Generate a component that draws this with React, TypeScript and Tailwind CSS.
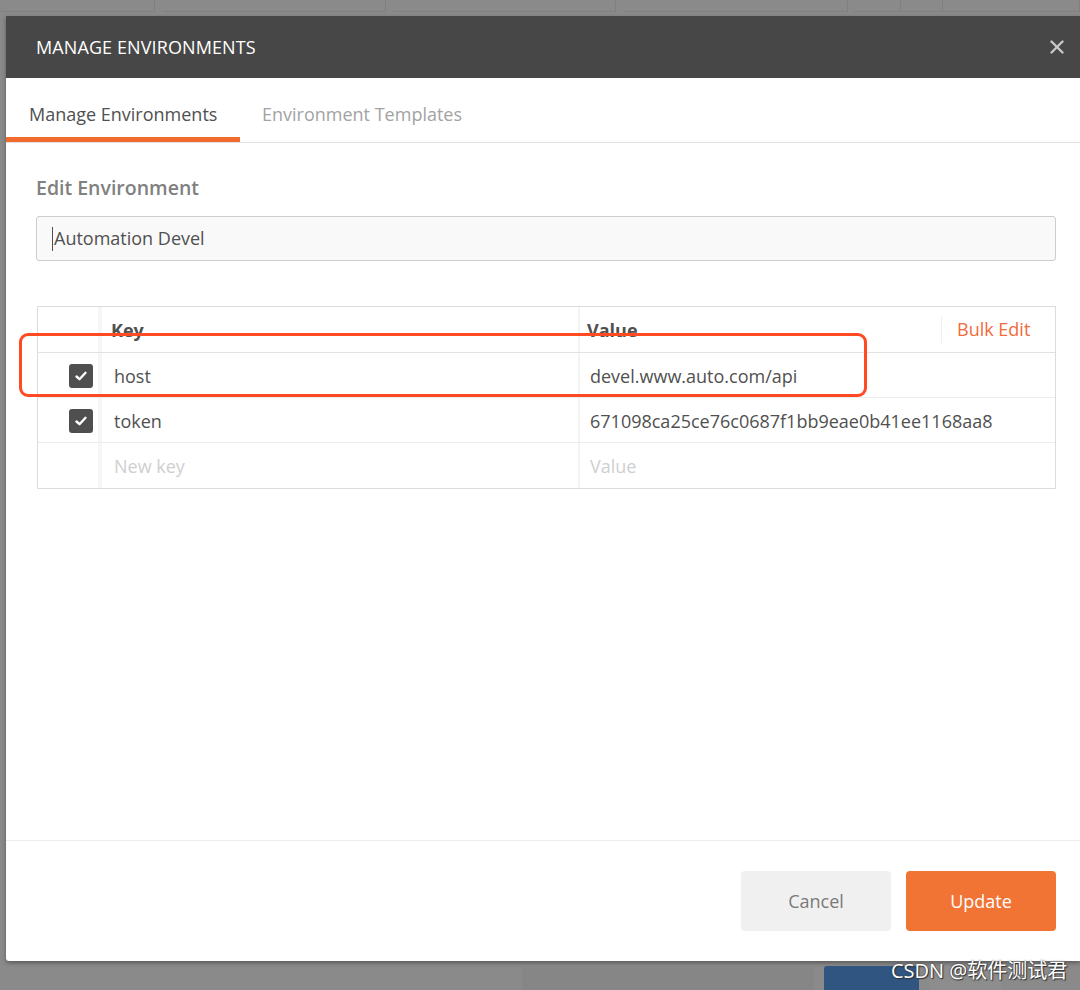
import { X } from "lucide-react";

type EnvRow = {
  key: string;
  value: string;
  enabled: boolean;
};

const rows: EnvRow[] = [
  { key: "host", value: "devel.www.auto.com/api", enabled: true },
  { key: "token", value: "671098ca25ce76c0687f1bb9eae0b41ee1168aa8", enabled: true },
];

const topCells = [155, 7, 224, 7, 223, 7, 225, 6, 47, 42, 137];

function CheckBox() {
  return (
    <div className="flex h-[24px] w-[24px] items-center justify-center rounded-[3px] bg-[#4f4f4f]">
      <svg width="16" height="16" viewBox="0 0 16 16" fill="none">
        <path
          d="M3.5 8.5 L6.5 11.2 L12.5 4.8"
          stroke="#ffffff"
          strokeWidth="2.4"
          strokeLinecap="round"
          strokeLinejoin="round"
        />
      </svg>
    </div>
  );
}

function TableRow({ row, last }: { row?: EnvRow; last?: boolean }) {
  return (
    <div
      className={`flex h-[45px] items-stretch ${last ? "" : "border-b border-[#ececec]"}`}
    >
      <div className="flex w-[60px] items-center justify-end pr-[5px] pt-[2px]">
        {row?.enabled && <CheckBox />}
      </div>
      <div className="w-[4px] bg-[#f6f6f6]" />
      <div className="flex w-[476px] items-center pl-[12px] pt-[2px] text-[18px]">
        {row ? (
          <span className="text-[#505050]">{row.key}</span>
        ) : (
          <span className="text-[#cfcfcf]">New key</span>
        )}
      </div>
      <div className="w-[2px] bg-[#f3f3f3]" />
      <div className="flex flex-1 items-center pl-[10px] pt-[2px] text-[18px]">
        {row ? (
          <span className="text-[#505050]">{row.value}</span>
        ) : (
          <span className="text-[#cfcfcf]">Value</span>
        )}
      </div>
    </div>
  );
}

function App() {
  return (
    <div
      className="relative flex h-[990px] w-[1080px] flex-col overflow-hidden bg-[#8a8a8a]"
      style={{ fontFamily: '"Open Sans", "Noto Sans CJK SC", sans-serif' }}
    >
      {/* app behind the overlay */}
      <div className="flex h-[16px] shrink-0 items-start">
        {topCells.map((w, i) => (
          <div
            key={i}
            className={`h-[12px] ${i % 2 === 1 && i < 8 ? "" : "border-r border-b border-[#808080]"}`}
            style={{ width: w }}
          />
        ))}
      </div>

      <div className="ml-[6px] flex h-[945px] shrink-0 flex-col overflow-hidden rounded-bl-[3px] bg-white shadow-[0_2px_4px_rgba(0,0,0,0.35)]">
        <div className="flex h-[62px] shrink-0 items-center justify-between bg-[#474747] pl-[30px] pr-[12px]">
          <h1 className="text-[18px] tracking-[0.1px] text-white">MANAGE ENVIRONMENTS</h1>
          <X size={22} strokeWidth={2.6} className="text-[#c9c9c9]" />
        </div>

        <div className="flex h-[65px] shrink-0 border-b border-[#e2e2e2]">
          <div className="w-[234px] border-b-[5px] border-[#f26b2e] pl-[23px] pt-[23px] text-[18px] text-[#505050]">
            Manage Environments
          </div>
          <div className="pl-[22px] pt-[23px] text-[18px] text-[#a3a3a3]">
            Environment Templates
          </div>
        </div>

        <div className="flex flex-1 flex-col pl-[30px] pr-[24px]">
          <div className="mt-[33px] text-[19.5px] font-semibold leading-[24px] text-[#808080]">
            Edit Environment
          </div>
          <div className="mt-[16px] flex h-[45px] items-center rounded-[3px] border border-[#cdcdcd] bg-[#f9f9f9] pl-[15px]">
            <span className="mr-[1px] h-[24px] w-[1px] bg-[#505050]" />
            <span className="text-[18px] text-[#505050]">Automation Devel</span>
          </div>

          <div className="mt-[45px] ml-[1px] border border-[#dcdcdc]">
            <div className="flex h-[46px] items-stretch border-b border-[#e2e2e2]">
              <div className="w-[60px]" />
              <div className="w-[4px] bg-[#f6f6f6]" />
              <div className="flex w-[476px] items-center pl-[9px] pt-[2px] text-[18px] font-bold text-[#505050]">
                Key
              </div>
              <div className="w-[2px] bg-[#f3f3f3]" />
              <div className="flex flex-1 items-center pl-[7px] pt-[2px] text-[18px] font-bold text-[#505050]">
                Value
              </div>
              <div className="my-[9px] w-[1px] bg-[#f0f0f0]" />
              <div className="flex w-[113px] items-center pl-[15px] text-[18px] text-[#f26b3a]">
                Bulk Edit
              </div>
            </div>
            {rows.map((row) => (
              <TableRow key={row.key} row={row} />
            ))}
            <TableRow last />
          </div>
        </div>

        <div className="flex h-[121px] shrink-0 items-start justify-end gap-[15px] border-t border-[#ececec] pr-[24px] pt-[30px]">
          <button className="h-[60px] w-[150px] rounded-[4px] bg-[#f0f0f0] text-[18px] text-[#7a7a7a]">
            Cancel
          </button>
          <button className="h-[60px] w-[150px] rounded-[4px] bg-[#f27435] text-[18px] text-white">
            Update
          </button>
        </div>
      </div>

      <div className="flex flex-1 items-end">
        <div className="ml-[522px] h-[24px] w-[292px] bg-[#868686]" />
        <div className="ml-[10px] h-[24px] w-[95px] rounded-t-[3px] bg-[#2f5580]" />
        <div className="ml-[10px] h-[24px] w-[72px] bg-[#8d8d8d]" />
      </div>

      {/* annotation */}
      <div className="pointer-events-none absolute left-[19px] top-[333px] h-[64px] w-[848px] rounded-[9px] border-[3.5px] border-[#ff4a22]" />
      <div className="pointer-events-none absolute left-[891px] top-[956px] text-[20px] text-white [text-shadow:0_0_2px_#333,1px_1px_1px_#333]">
        CSDN @软件测试君
      </div>
    </div>
  );
}

export default App;
